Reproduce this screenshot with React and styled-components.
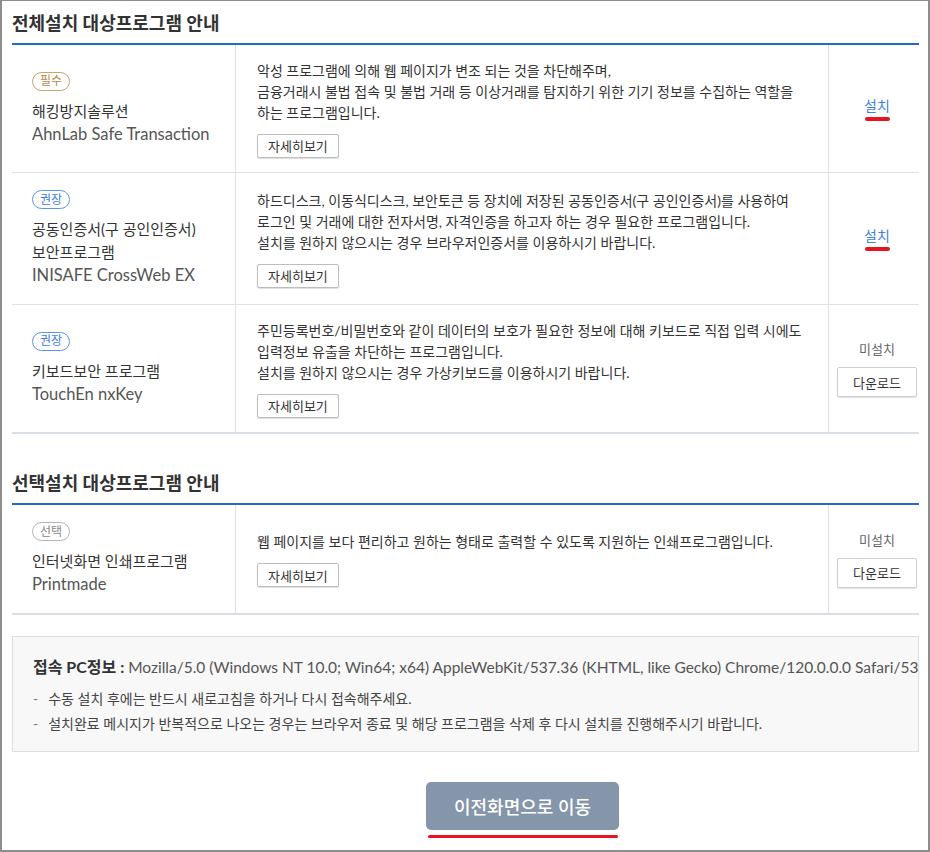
import React from 'react';
import styled, { createGlobalStyle } from 'styled-components';

const GlobalStyle = createGlobalStyle`
  html, body { margin: 0; padding: 0; background: #fff; }
  body { font-family: Lato, "Noto Sans CJK KR", sans-serif; color: #333; }
  *, *::before, *::after { box-sizing: border-box; }
`;

const Frame = styled.div`
  width: 930px;
  height: 852px;
  border-style: solid;
  border-color: #8d8d8d;
  border-width: 1px 2px 2px 2px;
  padding: 0 9px 0 10px;
  overflow: hidden;
`;

const SectionTitle = styled.h2`
  margin: ${p => (p.$first ? '0' : '27px 0 0')};
  height: 44px;
  display: flex;
  align-items: center;
  font-size: 18px;
  font-weight: 700;
  color: #333;
  border-bottom: 2px solid #2169d3;
`;

const Row = styled.div`
  display: grid;
  grid-template-columns: 224px 1fr 90px;
  border-bottom: ${p => (p.$last ? '2px solid #d8dde6' : '1px solid #e1e1e1')};
`;

const NameCell = styled.div`
  padding: 17px 20px;
  border-right: 1px solid #e1e1e1;
  display: flex;
  flex-direction: column;
  justify-content: center;
  align-items: flex-start;
`;

const badgeColors = {
  required: { border: '#cf9f68', text: '#b8864f' },
  recommended: { border: '#5b97e6', text: '#3c7fd8' },
  optional: { border: '#b5b5b5', text: '#8a8a8a' },
};

const Badge = styled.span`
  display: inline-flex;
  align-items: center;
  height: 19px;
  padding: 0 7px;
  border-radius: 10px;
  border: 1px solid ${p => badgeColors[p.$kind].border};
  color: ${p => badgeColors[p.$kind].text};
  font-size: 12px;
  line-height: 1;
  margin-bottom: 9px;
`;

const Name = styled.div`
  font-size: 15px;
  line-height: 23px;
  color: #333;
  white-space: nowrap;
`;

const Latin = styled.div`
  font-size: 16.5px;
  line-height: 23px;
  color: #555;
  white-space: nowrap;
`;

const DescCell = styled.div`
  padding: 14.5px 21px;
  border-right: 1px solid #e1e1e1;
  display: flex;
  flex-direction: column;
  justify-content: center;
  align-items: flex-start;
`;

const DescLine = styled.div`
  font-size: 14px;
  line-height: 21px;
  color: #333;
  white-space: nowrap;
`;

const DetailButton = styled.button`
  margin-top: 11px;
  height: 24px;
  padding: 0 10px;
  border: 1px solid #bdbdbd;
  border-radius: 2px;
  background: #fff;
  box-shadow: 0 1px 1px rgba(0, 0, 0, 0.13);
  font-family: inherit;
  font-size: 13px;
  color: #333;
`;

const ActionCell = styled.div`
  padding-left: 6px;
  display: flex;
  flex-direction: column;
  align-items: center;
  justify-content: center;
`;

const InstallLink = styled.a`
  font-size: 14px;
  line-height: 19px;
  color: #3d7fdf;
  text-decoration: none;
`;

const Annotation = styled.span`
  display: block;
  width: ${p => p.$w}px;
  height: 4px;
  border-radius: 2px;
  background: #e8131f;
  margin-top: 2px;
`;

const Status = styled.div`
  font-size: 13px;
  line-height: 18px;
  color: #666;
  margin-bottom: 9px;
`;

const DownloadButton = styled.button`
  width: 80px;
  height: 30px;
  border: 1px solid #cfcfcf;
  border-radius: 2px;
  background: #fff;
  box-shadow: 0 1px 1px rgba(0, 0, 0, 0.12);
  font-family: inherit;
  font-size: 13px;
  color: #333;
`;

const InfoBox = styled.div`
  margin-top: 21px;
  background: #f8f8f8;
  border: 1px solid #dedede;
  padding: 19px 20px 15px;
  overflow: hidden;
`;

const PcInfo = styled.div`
  font-size: 15.5px;
  line-height: 22px;
  color: #555;
  white-space: nowrap;
  margin-bottom: 9px;
  b { color: #333; font-weight: 700; font-size: 16px; }
`;

const NoteList = styled.ul`
  margin: 0;
  padding: 0;
  list-style: none;
`;

const Note = styled.li`
  display: flex;
  gap: 10px;
  font-size: 14px;
  line-height: 24.5px;
  color: #444;
  white-space: nowrap;
  &::before { content: '-'; color: #777; }
`;

const ButtonBar = styled.div`
  margin-top: 30px;
  padding-left: 414px;
  display: flex;
  flex-direction: column;
  align-items: flex-start;
`;

const BackButton = styled.button`
  width: 193px;
  height: 48px;
  border: none;
  border-radius: 5px;
  background: #8595aa;
  color: #fff;
  font-family: inherit;
  font-size: 18px;
  font-weight: 500;
`;

const ButtonMark = styled.span`
  display: block;
  width: 190px;
  height: 3px;
  margin: 5px 0 0 2px;
  border-radius: 2px;
  background: #e8131f;
`;

const required = [
  {
    badge: 'required', badgeText: '필수',
    name: ['해킹방지솔루션'], latin: 'AhnLab Safe Transaction',
    desc: [
      '악성 프로그램에 의해 웹 페이지가 변조 되는 것을 차단해주며,',
      '금융거래시 불법 접속 및 불법 거래 등 이상거래를 탐지하기 위한 기기 정보를 수집하는 역할을',
      '하는 프로그램입니다.',
    ],
    installed: true,
  },
  {
    badge: 'recommended', badgeText: '권장',
    name: ['공동인증서(구 공인인증서)', '보안프로그램'], latin: 'INISAFE CrossWeb EX',
    desc: [
      '하드디스크, 이동식디스크, 보안토큰 등 장치에 저장된 공동인증서(구 공인인증서)를 사용하여',
      '로그인 및 거래에 대한 전자서명, 자격인증을 하고자 하는 경우 필요한 프로그램입니다.',
      '설치를 원하지 않으시는 경우 브라우저인증서를 이용하시기 바랍니다.',
    ],
    installed: true,
  },
  {
    badge: 'recommended', badgeText: '권장',
    name: ['키보드보안 프로그램'], latin: 'TouchEn nxKey',
    desc: [
      '주민등록번호/비밀번호와 같이 데이터의 보호가 필요한 정보에 대해 키보드로 직접 입력 시에도',
      '입력정보 유출을 차단하는 프로그램입니다.',
      '설치를 원하지 않으시는 경우 가상키보드를 이용하시기 바랍니다.',
    ],
    installed: false,
  },
];

const optional = [
  {
    badge: 'optional', badgeText: '선택',
    name: ['인터넷화면 인쇄프로그램'], latin: 'Printmade',
    desc: ['웹 페이지를 보다 편리하고 원하는 형태로 출력할 수 있도록 지원하는 인쇄프로그램입니다.'],
    installed: false,
  },
];

function ProgramRow({ item, last }) {
  return (
    <Row $last={last}>
      <NameCell>
        <Badge $kind={item.badge}>{item.badgeText}</Badge>
        {item.name.map(n => <Name key={n}>{n}</Name>)}
        <Latin>{item.latin}</Latin>
      </NameCell>
      <DescCell>
        {item.desc.map(d => <DescLine key={d}>{d}</DescLine>)}
        <DetailButton>자세히보기</DetailButton>
      </DescCell>
      <ActionCell>
        {item.installed ? (
          <>
            <InstallLink href="#">설치</InstallLink>
            <Annotation $w={25} />
          </>
        ) : (
          <>
            <Status>미설치</Status>
            <DownloadButton>다운로드</DownloadButton>
          </>
        )}
      </ActionCell>
    </Row>
  );
}

export default function App() {
  return (
    <>
      <GlobalStyle />
      <Frame>
        <SectionTitle $first>전체설치 대상프로그램 안내</SectionTitle>
        {required.map((item, i) => (
          <ProgramRow key={item.latin} item={item} last={i === required.length - 1} />
        ))}
        <SectionTitle>선택설치 대상프로그램 안내</SectionTitle>
        {optional.map((item, i) => (
          <ProgramRow key={item.latin} item={item} last={i === optional.length - 1} />
        ))}
        <InfoBox>
          <PcInfo>
            <b>접속 PC정보 : </b>Mozilla/5.0 (Windows NT 10.0; Win64; x64) AppleWebKit/537.36 (KHTML, like Gecko) Chrome/120.0.0.0 Safari/537.36
          </PcInfo>
          <NoteList>
            <Note>수동 설치 후에는 반드시 새로고침을 하거나 다시 접속해주세요.</Note>
            <Note>설치완료 메시지가 반복적으로 나오는 경우는 브라우저 종료 및 해당 프로그램을 삭제 후 다시 설치를 진행해주시기 바랍니다.</Note>
          </NoteList>
        </InfoBox>
        <ButtonBar>
          <BackButton>이전화면으로 이동</BackButton>
          <ButtonMark />
        </ButtonBar>
      </Frame>
    </>
  );
}
